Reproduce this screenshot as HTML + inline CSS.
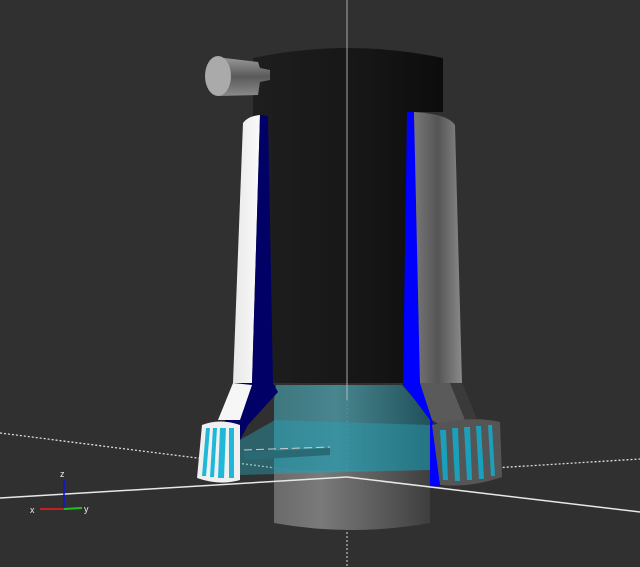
<!DOCTYPE html>
<html><head><meta charset="utf-8"><style>
html,body{margin:0;padding:0;background:#303030;width:640px;height:567px;overflow:hidden}
svg{display:block}
</style></head><body>
<svg width="640" height="567" viewBox="0 0 640 567" xmlns="http://www.w3.org/2000/svg">
<defs>
<linearGradient id="blk" x1="0" x2="1"><stop offset="0" stop-color="#1e1e1e"/><stop offset="0.6" stop-color="#161616"/><stop offset="1" stop-color="#0c0c0c"/></linearGradient>
<linearGradient id="gry" x1="0" x2="1"><stop offset="0" stop-color="#777"/><stop offset="0.5" stop-color="#555"/><stop offset="1" stop-color="#8a8a8a"/></linearGradient>
<linearGradient id="wht" x1="0" x2="1"><stop offset="0" stop-color="#e8e8e8"/><stop offset="1" stop-color="#fafafa"/></linearGradient>
<linearGradient id="cyl" x1="0" x2="1"><stop offset="0" stop-color="#6a6a6a"/><stop offset="0.3" stop-color="#7a7a7a"/><stop offset="0.8" stop-color="#505050"/><stop offset="1" stop-color="#3e3e3e"/></linearGradient>
<linearGradient id="cyan" x1="0" x2="1"><stop offset="0" stop-color="#3f7f88"/><stop offset="0.4" stop-color="#4b8f99"/><stop offset="1" stop-color="#1f5560"/></linearGradient>
<linearGradient id="knob" x1="0" x2="0" y1="0" y2="1"><stop offset="0" stop-color="#9a9a9a"/><stop offset="0.5" stop-color="#5a5a5a"/><stop offset="1" stop-color="#8a8a8a"/></linearGradient>
</defs>
<rect width="640" height="567" fill="#303030"/>
<line x1="0" y1="433" x2="347" y2="477" stroke="#ddd" stroke-width="1.3" stroke-dasharray="2,2"/>
<line x1="347" y1="477" x2="640" y2="459" stroke="#ddd" stroke-width="1.3" stroke-dasharray="2,2"/>
<line x1="347" y1="400" x2="347" y2="567" stroke="#ddd" stroke-width="1" stroke-dasharray="2,2"/>
<path d="M274 470 L430 470 L430 523 Q352 537 274 523 Z" fill="url(#cyl)"/>
<path d="M276 385 L402 385 L415 400 L430 420 L430 470 L274 472 L274 400 Z" fill="url(#cyan)" opacity="0.9"/>
<path d="M240 440 L275 420 L430 425 L430 470 L240 475 Z" fill="#2a9fb3" opacity="0.45"/>
<path d="M243 452 L330 448 L330 455 L245 460 Z" fill="#2a6a75"/>
<line x1="244" y1="450" x2="330" y2="447" stroke="#ccc" stroke-width="1" stroke-dasharray="8,4"/>
<path d="M253 58 Q348 38 443 58 L443 112 L408 112 L404 383 L273 383 L262 116 L253 116 Z" fill="url(#blk)"/>
<path d="M216 57 L258 62 L260 68 L270 70 L270 80 L260 82 L258 95 L218 96 Z" fill="url(#knob)"/>
<ellipse cx="218" cy="76" rx="13" ry="20" fill="#aaa"/>
<path d="M243 123 Q248 116 260 115 L252 383 L233 383 Z" fill="url(#wht)"/>
<path d="M260 115 L268 116 L273 383 L278 392 L248 425 L240 440 L240 480 L218 482 L225 420 L233 383 L252 383 Z" fill="#000066"/>
<path d="M233 383 L252 385 L240 420 L218 420 Z" fill="#f6f6f6"/>
<path d="M202 425 Q220 418 240 425 L240 480 Q220 486 197 478 Z" fill="#f0f0f0"/>
<g fill="#20b8d8"><path d="M206 428 L210 428 L206 476 L202 476 Z"/><path d="M213 428 L217 428 L214 477 L210 477 Z"/><path d="M220 428 L226 428 L224 478 L218 478 Z"/><path d="M229 428 L234 428 L234 478 L229 478 Z"/></g>
<path d="M407 112 L414 112 L420 383 L432 420 L448 485 L430 487 L430 420 L415 400 L403 385 Z" fill="#0000ff"/>
<path d="M414 112 Q448 114 455 125 L462 383 L420 383 Z" fill="url(#gry)"/>
<path d="M420 383 L462 383 L476 418 L440 425 L432 420 Z" fill="#5a5a5a"/>
<path d="M450 383 L462 383 L476 418 L465 420 Z" fill="#3a3a3a"/>
<path d="M432 425 Q470 415 500 422 L502 477 Q470 488 440 485 Z" fill="#555"/>
<g fill="#1aa0bb"><path d="M440 430 L446 430 L448 480 L443 480 Z"/><path d="M452 428 L458 428 L460 481 L455 481 Z"/><path d="M464 427 L470 427 L472 480 L467 480 Z"/><path d="M476 426 L481 426 L484 479 L479 479 Z"/><path d="M488 425 L492 425 L495 476 L491 476 Z"/></g>
<line x1="0" y1="498" x2="347" y2="477" stroke="#e8e8e8" stroke-width="1.5"/>
<line x1="347" y1="477" x2="640" y2="512" stroke="#e8e8e8" stroke-width="1.5"/>
<line x1="347" y1="0" x2="347" y2="400" stroke="#ccc" stroke-width="1" opacity="0.8"/>
<line x1="64" y1="480" x2="64" y2="508" stroke="#1010e0" stroke-width="1.5"/>
<line x1="40" y1="509" x2="64" y2="509" stroke="#c02020" stroke-width="2"/>
<line x1="64" y1="509" x2="82" y2="508" stroke="#20c020" stroke-width="2"/>
<text x="60" y="477" font-family="Liberation Sans, sans-serif" font-size="9" fill="#eee">z</text>
<text x="30" y="513" font-family="Liberation Sans, sans-serif" font-size="9" fill="#eee">x</text>
<text x="84" y="512" font-family="Liberation Sans, sans-serif" font-size="9" fill="#eee">y</text>
</svg>
</body></html>
